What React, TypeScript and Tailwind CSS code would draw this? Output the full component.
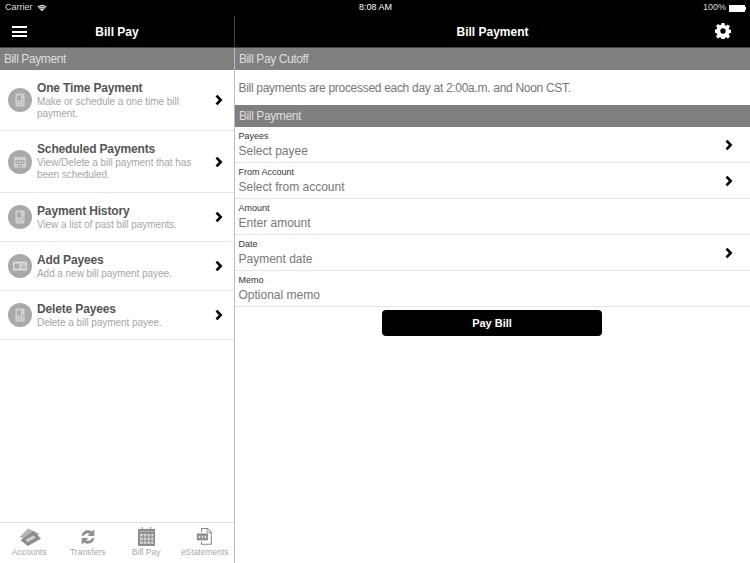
import React from "react";

const Chevron = ({ className = "" }: { className?: string }) => (
  <svg viewBox="0 0 8 12" className={`w-[8px] h-[12px] ${className}`}>
    <path d="M1.5 1.600 L5.700 6 L1.500 10.400" fill="none" stroke="#000" strokeWidth="2.600" />
  </svg>
);

const DocIcon = () => (
  <svg viewBox="0 0 28 28" className="w-[28px] h-[28px]">
    <circle cx="14" cy="14" r="12" fill="#a9a9a9" />
    <path d="M9.500 7.500h9v13h-9z" fill="#d0d0d0" />
    <path d="M11 9.500h4v5h-4z" fill="#a9a9a9" />
    <path d="M16 13h1.400v5H16zM11 16h4v1h-4zM11 18h4v1h-4z" fill="#bdbdbd" />
  </svg>
);
const CalIcon = () => (
  <svg viewBox="0 0 28 28" className="w-[28px] h-[28px]">
    <circle cx="14" cy="14" r="12" fill="#a9a9a9" />
    <path d="M8 9h12v10.500H8z" fill="#d0d0d0" />
    <path d="M9.500 12h2v1.500h-2zM12 12h2v1.500h-2zM14.500 12h2v1.500h-2zM17 12h1.500v1.500H17zM9.500 14.500h2V16h-2zM12 14.500h2V16h-2zM14.500 14.500h2V16h-2zM17 14.500h1.500V16H17zM12 17h2v1.300h-2zM14.500 17h2v1.300h-2z" fill="#a2a2a2" />
  </svg>
);
const CardIcon = () => (
  <svg viewBox="0 0 28 28" className="w-[28px] h-[28px]">
    <circle cx="14" cy="14" r="12" fill="#a9a9a9" />
    <path d="M7 9.500h14v9H7z" fill="#d9d9d9" />
    <path d="M8.500 11.500h5v5h-5z" fill="#a9a9a9" />
    <path d="M15.500 11.500h4v1h-4zM15.500 13.500h4v3h-4z" fill="#b4b4b4" />
  </svg>
);

const Wifi = () => (
  <svg viewBox="0 0 14 10" className="w-[10px] h-[8px]">
    <path d="M7 9.500 L0.500 3 C4 0 10 0 13.500 3 Z" fill="#e4e4e4" />
    <path d="M2.300 4.200 C5 2.200 9 2.200 11.700 4.200 M4 6 C5.800 4.900 8.200 4.900 10 6" stroke="#000" strokeWidth="0.800" fill="none" />
  </svg>
);

const Gear = () => (
  <svg viewBox="0 0 24 24" className="w-[16px] h-[16px]">
    <path
      fillRule="evenodd"
      fill="#fff"
      d="M9.800 0h4.400l.6 3.300 1.900.8 2.700-1.900 3.100 3.100-1.900 2.700.8 1.900 3.300.6v4.400l-3.300.6-.8 1.900 1.900 2.700-3.100 3.100-2.700-1.900-1.900.8-.6 3.300H9.800l-.6-3.300-1.900-.8-2.700 1.900-3.100-3.100 1.900-2.700-.8-1.900L-.7 14.200V9.800l3.300-.6.8-1.900L1.500 4.600 4.600 1.500l2.700 1.900 1.900-.8zM12 8a4 4 0 1 0 0 8 4 4 0 0 0 0-8z"
    />
  </svg>
);

const AccountsIcon = () => (
  <svg viewBox="0 0 30 22" className="w-[25px] h-[18px]">
    <path d="M3 11 L13 0.500 L27 7 L17 17z" fill="#b5b5b5" />
    <path d="M4 15 L20 3.500 L29 13 L13 22z" fill="#8c8c8c" />
    <path d="M10 14.500 L20 9 L22.500 12 L12.500 17.500z" fill="#cfcfcf" />
  </svg>
);
const TransfersIcon = () => (
  <svg viewBox="0 0 20 20" className="w-[18px] h-[18px]">
    <path d="M3 8.500 C4 3 10 1 14.500 4 L17 1.500 V9 H9.500 L12 6.500 C9.500 5 6.500 6 5.500 8.500z" fill="#8f8f8f" />
    <path d="M17 11.500 C16 17 10 19 5.500 16 L3 18.500 V11 H10.500 L8 13.500 C10.500 15 13.500 14 14.500 11.500z" fill="#8f8f8f" />
  </svg>
);
const BillPayIcon = () => (
  <svg viewBox="0 0 18 20" className="w-[17px] h-[19px]">
    <path d="M4 0h1v3H4zM13 0h1v3h-1z" fill="#8a8a8a" />
    <path d="M0 2h18v18H0z" fill="#8a8a8a" />
    <path d="M1 4h16v1H1z" fill="#bbb" />
    <path d="M2 7h3v3H2zM6 7h3v3H6zM10 7h3v3h-3zM14 7h2.500v3H14zM2 11h3v3H2zM6 11h3v3H6zM10 11h3v3h-3zM14 11h2.500v3H14zM2 15h3v3H2zM6 15h3v3H6zM10 15h3v3h-3zM14 15h2.500v3H14z" fill="#d2d2d2" />
  </svg>
);
const PdfIcon = () => (
  <svg viewBox="0 0 20 20" className="w-[17px] h-[17px]">
    <path d="M6.500 5V.7h7L18 5v14H6.500v-3" fill="none" stroke="#888" strokeWidth="1.200" />
    <path d="M13 1v4.500h5" fill="none" stroke="#888" strokeWidth="1" />
    <path d="M1 6.500h13v8H1z" fill="#8a8a8a" />
    <path d="M3 9h2v3H3zM6.500 9h2v3h-2zM10 9h2v3h-2z" fill="#ddd" />
  </svg>
);

const menu = [
  { t: "One Time Payment", d: "Make or schedule a one time bill payment.", i: <DocIcon />, h: "h-[61px]" },
  { t: "Scheduled Payments", d: "View/Delete a bill payment that has been scheduled.", i: <CalIcon />, h: "h-[62px]" },
  { t: "Payment History", d: "View a list of past bill payments.", i: <DocIcon />, h: "h-[49px]" },
  { t: "Add Payees", d: "Add a new bill payment payee.", i: <CardIcon />, h: "h-[49px]" },
  { t: "Delete Payees", d: "Delete a bill payment payee.", i: <DocIcon />, h: "h-[49px]" },
];

const fields = [
  { l: "Payees", v: "Select payee", c: true },
  { l: "From Account", v: "Select from account", c: true },
  { l: "Amount", v: "Enter amount", c: false },
  { l: "Date", v: "Payment date", c: true },
  { l: "Memo", v: "Optional memo", c: false },
];

const tabs = [
  { l: "Accounts", i: <AccountsIcon /> },
  { l: "Transfers", i: <TransfersIcon /> },
  { l: "Bill Pay", i: <BillPayIcon /> },
  { l: "eStatements", i: <PdfIcon /> },
];

const Section = ({ children }: { children: string }) => (
  <div className="h-[22px] bg-[#808080] pl-[4px] text-[12px] tracking-[-0.4px] leading-[23px] text-[#dedede]">{children}</div>
);

export default function App() {
  return (
    <div className="w-[750px] h-[563px] flex flex-col bg-white overflow-hidden font-['Liberation_Sans',Arial,sans-serif]">
      <div className="h-[16px] bg-black grid grid-cols-3 items-center pl-[5px] pr-[4px] text-[9px] text-[#ddd]">
        <div className="flex items-center gap-[4px]">
          <span>Carrier</span>
          <Wifi />
        </div>
        <div className="text-center text-white">8:08 AM</div>
        <div className="flex items-center justify-end gap-[3px]">
          <span>100%</span>
          <div className="flex items-center">
            <div className="w-[16px] h-[7px] bg-white" />
            <div className="w-[1px] h-[3px] bg-white" />
          </div>
        </div>
      </div>
      <div className="flex-1 flex min-h-0">
        <div className="w-[235px] flex flex-col">
          <div className="h-[32px] bg-black border-b border-r border-[#444] relative flex items-center justify-center">
            <div className="absolute left-[12px] top-[10px] w-[15px] flex flex-col gap-[2.500px]">
              <div className="h-[2px] bg-white" />
              <div className="h-[2px] bg-white" />
              <div className="h-[2px] bg-white" />
            </div>
            <span className="text-white text-[12px] font-bold">Bill Pay</span>
          </div>
          <div className="flex-1 flex flex-col border-r border-[#bcbcbc] min-h-0">
            <Section>Bill Payment</Section>
            {menu.map((m) => (
              <div key={m.t} className={`${m.h} border-b border-[#e8e8e8] flex items-center pl-[5.500px] pr-[11px]`}>
                <div className="w-[31.500px] flex justify-start shrink-0">{m.i}</div>
                <div className="flex-1 min-w-0">
                  <div className="text-[12px] tracking-[-0.15px] leading-[14px] mb-[1px] font-bold text-[#555]">{m.t}</div>
                  <div className="text-[10px] tracking-[-0.05px] leading-[12px] text-[#a6a6a6] w-[162px]">{m.d}</div>
                </div>
                <Chevron />
              </div>
            ))}
            <div className="flex-1" />
            <div className="h-[41px] border-t border-[#dcdcdc] grid grid-cols-4 pt-[3px]">
              {tabs.map((t) => (
                <div key={t.l} className="flex flex-col items-center">
                  <div className="h-[21px] flex items-center">{t.i}</div>
                  <div className="text-[8.500px] leading-[11px] text-[#a8a8a8]">{t.l}</div>
                </div>
              ))}
            </div>
          </div>
        </div>
        <div className="flex-1 flex flex-col">
          <div className="h-[32px] bg-black border-b border-[#444] relative flex items-center justify-center">
            <span className="text-white text-[12px] font-bold">Bill Payment</span>
            <div className="absolute right-[19px] top-[7px]">
              <Gear />
            </div>
          </div>
          <Section>Bill Pay Cutoff</Section>
          <div className="h-[35px] flex items-center px-[3.500px] text-[12px] tracking-[-0.3px] text-[#777]">
            Bill payments are processed each day at 2:00a.m. and Noon CST.
          </div>
          <Section>Bill Payment</Section>
          {fields.map((f) => (
            <div key={f.l} className="h-[36px] border-b border-[#e4e4e4] flex items-center pl-[3.500px] pr-[17px]">
              <div className="flex-1">
                <div className="text-[9px] leading-[11px] mt-[1px] text-[#333]">{f.l}</div>
                <div className="text-[12px] leading-[16px] mt-[1px] text-[#777]">{f.v}</div>
              </div>
              {f.c && <Chevron />}
            </div>
          ))}
          <div className="flex justify-center pt-[3px] pr-[1px]">
            <button className="w-[220px] h-[26px] bg-black rounded-[4px] text-white text-[11px] font-bold">Pay Bill</button>
          </div>
        </div>
      </div>
    </div>
  );
}
